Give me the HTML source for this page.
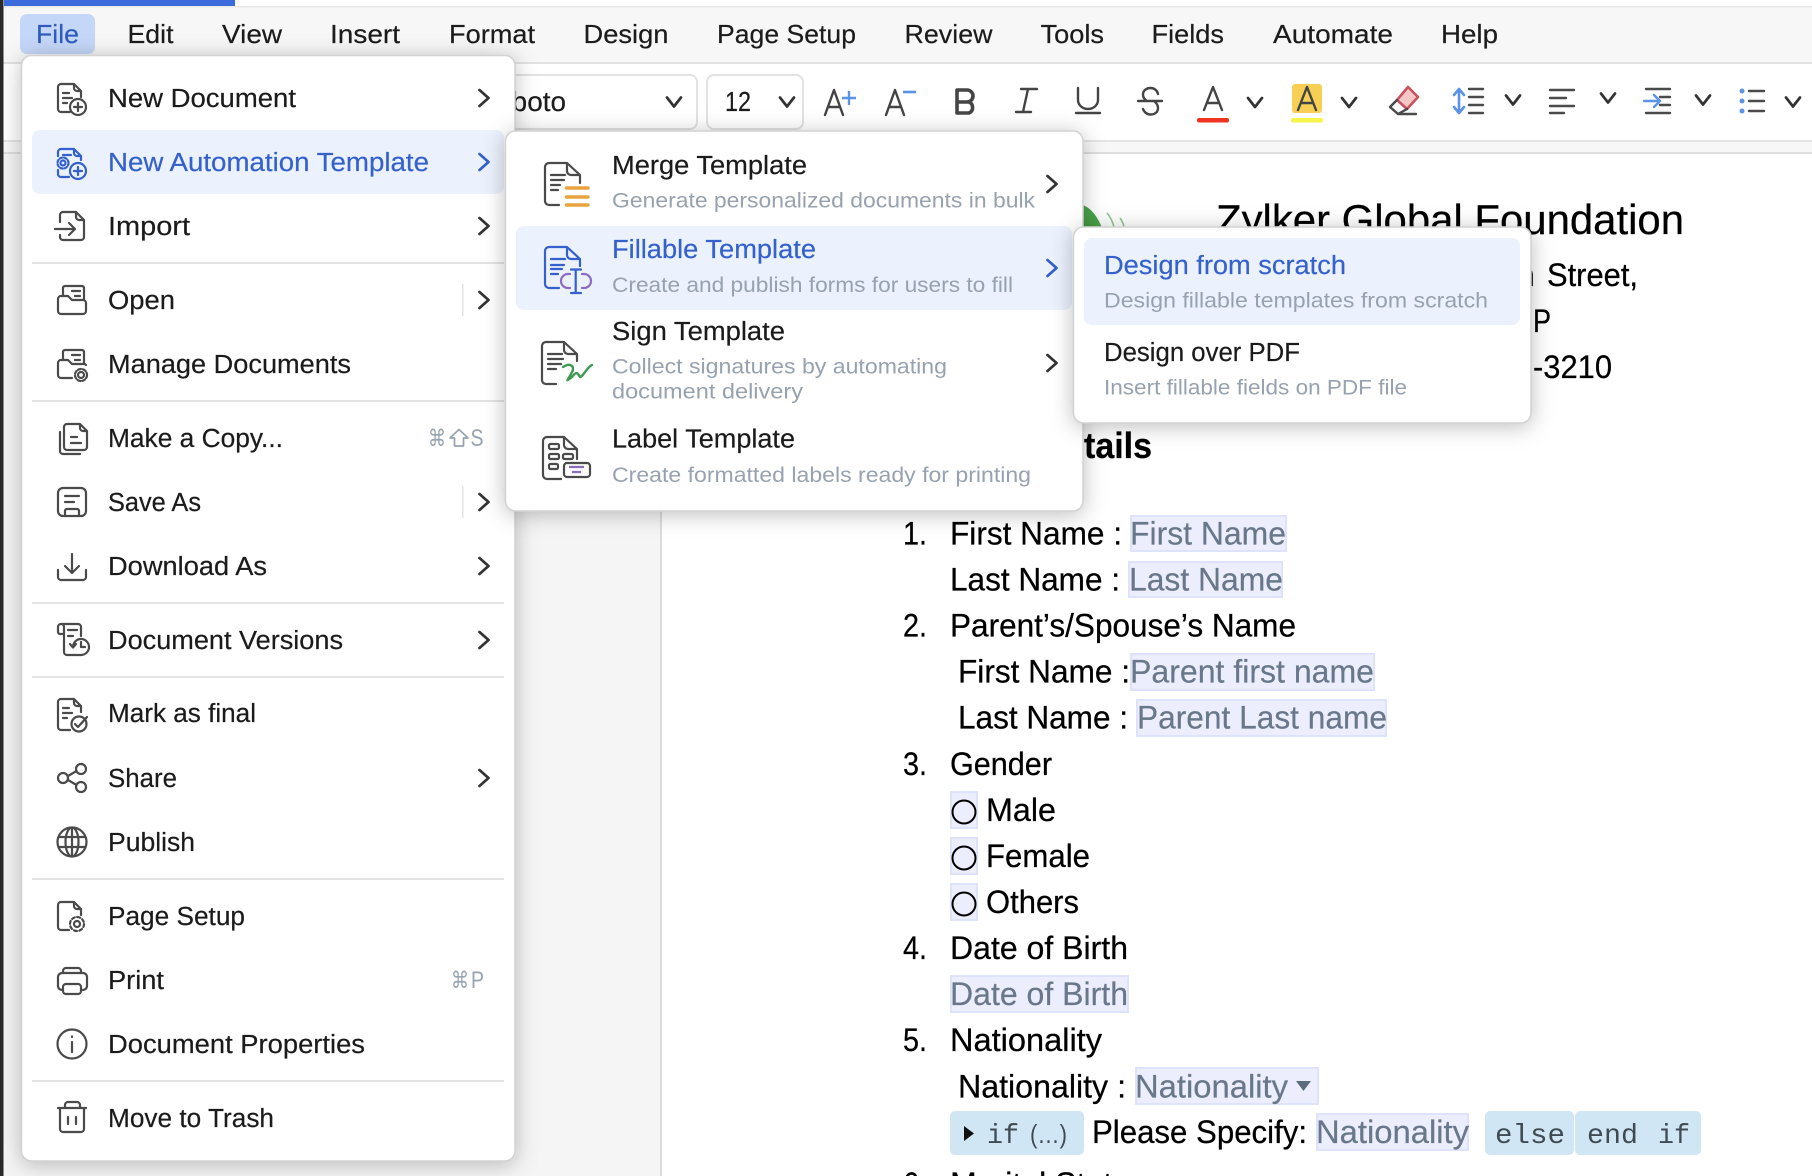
<!DOCTYPE html>
<html><head><meta charset="utf-8"><title>Zoho Writer</title>
<style>
html,body{margin:0;padding:0;background:#fff;width:1812px;height:1176px;overflow:hidden}
svg{display:block}
text{font-family:"Liberation Sans",sans-serif;white-space:pre}
.b{font-size:26px;fill:#1c1c1c;stroke:#1c1c1c;stroke-width:.2}
.m{font-size:25.5px;fill:#1b1b1b;stroke:#1b1b1b;stroke-width:.2}
.s{font-size:21.5px;fill:#98a2af}
.m.bl{fill:#3461cb;stroke:#3461cb}
.d{font-size:32px;fill:#000;stroke:#000;stroke-width:.25}
.f{font-size:32px;fill:#68788a;stroke:#68788a;stroke-width:.2}
.c{font-family:"Liberation Mono",monospace;font-size:28px;fill:#3f4a52}
.k{font-family:"DejaVu Sans",sans-serif;font-size:23px;fill:#97a3b0}
.k2{font-size:24px;fill:#97a3b0}
.ic{fill:none;stroke:#4a4a4a;stroke-width:2.2;stroke-linecap:round;stroke-linejoin:round}
.ch{fill:none;stroke:#333;stroke-width:2.7;stroke-linecap:round;stroke-linejoin:round}
.fb{fill:#ecedfd;stroke:#dfe2fb;stroke-width:2}
.sep{fill:#e3e3e3}
.pop{fill:#fff;stroke:#d2d2d2;stroke-width:1.5;filter:drop-shadow(0 3px 11px rgba(0,0,0,.25))}
</style></head><body>
<svg xmlns="http://www.w3.org/2000/svg" width="1812" height="1176" viewBox="0 0 1812 1176">
<defs>
<path id="chev" d="M-4.5 -8 L4.5 0 L-4.5 8"/>
<path id="dn" d="M-7 -4.5 L0 4.5 L7 -4.5"/>
</defs>

<rect width="1812" height="1176" fill="#fff"/>
<rect x="0" y="152" width="661" height="1024" fill="#f5f5f5"/>
<rect x="660" y="152" width="2" height="1024" fill="#dcdcdc"/>

<!-- document -->
<text class="d" x="1216" y="234" style="font-size:42px" textLength="468" lengthAdjust="spacingAndGlyphs">Zylker Global Foundation</text>
<text class="d" x="1515" y="286" textLength="20" lengthAdjust="spacingAndGlyphs">n</text>
<text class="d" x="1547" y="286" textLength="91" lengthAdjust="spacingAndGlyphs">Street,</text>
<text class="d" x="1533" y="332" textLength="18" lengthAdjust="spacingAndGlyphs">P</text>
<text class="d" x="1533" y="378" textLength="79" lengthAdjust="spacingAndGlyphs">-3210</text>
<text class="d" x="1084" y="458" style="font-size:36px;font-weight:bold" textLength="68" lengthAdjust="spacingAndGlyphs">tails</text>
<path d="M1083 205 Q1095 210 1102 228 H1083 Z" fill="#4aa54a"/>
<path d="M1107 213 Q1112 219 1114 227 M1120 218 Q1123 222 1124 227" stroke="#8cc98c" stroke-width="1.6" fill="none"/>

<text class="d" x="903" y="544.5" textLength="24" lengthAdjust="spacingAndGlyphs">1.</text>
<text class="d" x="950" y="544.5" textLength="172" lengthAdjust="spacingAndGlyphs">First Name :</text>
<rect class="fb" x="1131" y="516" width="155" height="35"/>
<text class="f" x="1130" y="544.5" textLength="156" lengthAdjust="spacingAndGlyphs">First Name</text>
<text class="d" x="950" y="590.5" textLength="170" lengthAdjust="spacingAndGlyphs">Last Name :</text>
<rect class="fb" x="1129" y="562" width="153" height="35"/>
<text class="f" x="1129" y="590.5" textLength="154" lengthAdjust="spacingAndGlyphs">Last Name</text>
<text class="d" x="903" y="636.5" textLength="24" lengthAdjust="spacingAndGlyphs">2.</text>
<text class="d" x="950" y="636.5" textLength="346" lengthAdjust="spacingAndGlyphs">Parent’s/Spouse’s Name</text>
<text class="d" x="958" y="682.5" textLength="172" lengthAdjust="spacingAndGlyphs">First Name :</text>
<rect class="fb" x="1131" y="654" width="243" height="36"/>
<text class="f" x="1130" y="682.5" textLength="244" lengthAdjust="spacingAndGlyphs">Parent first name</text>
<text class="d" x="958" y="728.5" textLength="170" lengthAdjust="spacingAndGlyphs">Last Name :</text>
<rect class="fb" x="1137" y="700" width="249" height="36"/>
<text class="f" x="1137" y="728.5" textLength="250" lengthAdjust="spacingAndGlyphs">Parent Last name</text>
<text class="d" x="903" y="775" textLength="24" lengthAdjust="spacingAndGlyphs">3.</text>
<text class="d" x="950" y="775" textLength="102" lengthAdjust="spacingAndGlyphs">Gender</text>

<rect class="fb" x="951" y="792" width="26" height="36"/>
<ellipse cx="964" cy="812" rx="11.5" ry="11.5" fill="none" stroke="#000" stroke-width="2"/>
<text class="d" x="986" y="821" textLength="70" lengthAdjust="spacingAndGlyphs">Male</text>
<rect class="fb" x="951" y="838" width="26" height="36"/>
<ellipse cx="964" cy="858" rx="11.5" ry="11.5" fill="none" stroke="#000" stroke-width="2"/>
<text class="d" x="986" y="867" textLength="104" lengthAdjust="spacingAndGlyphs">Female</text>
<rect class="fb" x="951" y="884" width="26" height="36"/>
<ellipse cx="964" cy="904" rx="11.5" ry="11.5" fill="none" stroke="#000" stroke-width="2"/>
<text class="d" x="986" y="913" textLength="93" lengthAdjust="spacingAndGlyphs">Others</text>

<text class="d" x="903" y="959" textLength="24" lengthAdjust="spacingAndGlyphs">4.</text>
<text class="d" x="950" y="959" textLength="178" lengthAdjust="spacingAndGlyphs">Date of Birth</text>
<rect class="fb" x="951" y="976" width="177" height="36"/>
<text class="f" x="950" y="1005" textLength="178" lengthAdjust="spacingAndGlyphs">Date of Birth</text>
<text class="d" x="903" y="1051" textLength="24" lengthAdjust="spacingAndGlyphs">5.</text>
<text class="d" x="950" y="1051" textLength="152" lengthAdjust="spacingAndGlyphs">Nationality</text>
<text class="d" x="958" y="1097.5" textLength="168" lengthAdjust="spacingAndGlyphs">Nationality :</text>
<rect class="fb" x="1136" y="1068" width="182" height="36"/>
<text class="f" x="1135" y="1097.5" textLength="153" lengthAdjust="spacingAndGlyphs">Nationality</text>
<path d="M1296 1081 H1311 L1303.5 1091Z" fill="#5d6c7c"/>

<rect x="950" y="1111" width="134" height="44" rx="5" fill="#d1e6f5"/>
<path d="M964 1126 L974 1133.5 L964 1141Z" fill="#111"/>
<text class="c" x="987" y="1143" textLength="32" lengthAdjust="spacingAndGlyphs">if</text>
<text class="c" x="1030" y="1143" textLength="37" lengthAdjust="spacingAndGlyphs" style="font-family:'Liberation Sans',sans-serif;font-size:26px">(…)</text>
<text class="d" x="1092" y="1143" textLength="215" lengthAdjust="spacingAndGlyphs">Please Specify:</text>
<rect class="fb" x="1317" y="1114" width="151" height="36"/>
<text class="f" x="1316" y="1143" textLength="153" lengthAdjust="spacingAndGlyphs">Nationality</text>
<rect x="1485" y="1111" width="89" height="44" rx="5" fill="#d1e6f5"/>
<rect x="1575" y="1111" width="126" height="44" rx="5" fill="#d1e6f5"/>
<text class="c" x="1495" y="1143" textLength="70" lengthAdjust="spacingAndGlyphs">else</text>
<text class="c" x="1587" y="1143" textLength="51" lengthAdjust="spacingAndGlyphs">end</text>
<text class="c" x="1658" y="1143" textLength="32" lengthAdjust="spacingAndGlyphs">if</text>
<text class="d" x="903" y="1195" textLength="24" lengthAdjust="spacingAndGlyphs">6.</text>
<text class="d" x="950" y="1195" textLength="196" lengthAdjust="spacingAndGlyphs">Marital Status</text>

<!-- chrome -->
<rect x="0" y="6" width="1812" height="56" fill="#f7f7f7"/>
<rect x="0" y="6" width="1812" height="1.5" fill="#e8e8e8"/>
<rect x="0" y="62" width="1812" height="2" fill="#e2e2e2"/>
<rect x="0" y="64" width="1812" height="76" fill="#fff"/>
<rect x="0" y="140" width="1812" height="2" fill="#e4e4e4"/>
<rect x="0" y="142" width="1812" height="10" fill="#f7f7f7"/>
<rect x="0" y="152" width="1812" height="2" fill="#dedede"/>
<rect x="4" y="0" width="231" height="6" fill="#3c6cdb"/>
<rect x="0" y="0" width="3.5" height="1176" fill="#2a2a2a"/>

<rect x="20" y="14" width="75" height="40" rx="7" fill="#c5d7f8"/>
<text class="b" x="36" y="43" style="fill:#2f5bbd;stroke:#2f5bbd" textLength="43" lengthAdjust="spacingAndGlyphs">File</text>
<text class="b" x="127.5" y="43" textLength="46" lengthAdjust="spacingAndGlyphs">Edit</text>
<text class="b" x="222" y="43" textLength="60" lengthAdjust="spacingAndGlyphs">View</text>
<text class="b" x="330" y="43" textLength="70" lengthAdjust="spacingAndGlyphs">Insert</text>
<text class="b" x="449" y="43" textLength="86" lengthAdjust="spacingAndGlyphs">Format</text>
<text class="b" x="583.5" y="43" textLength="85" lengthAdjust="spacingAndGlyphs">Design</text>
<text class="b" x="717" y="43" textLength="139" lengthAdjust="spacingAndGlyphs">Page Setup</text>
<text class="b" x="904.5" y="43" textLength="88" lengthAdjust="spacingAndGlyphs">Review</text>
<text class="b" x="1040.5" y="43" textLength="63.5" lengthAdjust="spacingAndGlyphs">Tools</text>
<text class="b" x="1151.5" y="43" textLength="72.5" lengthAdjust="spacingAndGlyphs">Fields</text>
<text class="b" x="1273" y="43" textLength="120" lengthAdjust="spacingAndGlyphs">Automate</text>
<text class="b" x="1441" y="43" textLength="57" lengthAdjust="spacingAndGlyphs">Help</text>

<!-- toolbar -->
<rect x="430" y="75" width="267" height="54" rx="7" fill="#fff" stroke="#e2e2e2" stroke-width="2"/>
<text class="b" x="476" y="111" style="font-size:28px" textLength="90" lengthAdjust="spacingAndGlyphs">Roboto</text>
<use href="#dn" x="674" y="102" class="ch"/>
<rect x="707" y="75" width="96" height="54" rx="7" fill="#fff" stroke="#e2e2e2" stroke-width="2"/>
<text class="b" x="725" y="111" style="font-size:28px" textLength="26" lengthAdjust="spacingAndGlyphs">12</text>
<use href="#dn" x="787" y="102" class="ch"/>

<g class="ic" style="stroke:#444;stroke-width:2.4">
<path d="M825 115 L834 90 L843 115 M828.5 107 H839.5"/>
<path d="M886 115 L895 90 L904 115 M889.5 107 H900.5"/>
<path d="M1021 89 H1037 M1016 112 H1031 M1028 89 L1023 112"/>
<path d="M1078 88 V100 a10 9 0 0 0 20 0 V88 M1076 113 H1100"/>
<path d="M1158 94 C1157 90 1154 88 1150.5 88 C1146 88 1143 91 1143 94.5 C1143 97 1144.5 99.5 1147 101 M1154 101 C1156.5 103 1158 105 1158 108 C1158 112 1155 114.5 1150.5 114.5 C1147 114.5 1144 112 1143 109 M1138 101 H1162"/>
<path d="M1204 110 L1213 87 L1222 110 M1207 103 H1219"/>
</g>
<path d="M957 90 H967 a6 6 0 0 1 0 12 H957 Z M957 102 H969 a6 6 0 0 1 0 11 H957 Z" fill="none" stroke="#454545" stroke-width="3.6" stroke-linejoin="round"/>
<path d="M849 91 V105 M842 98 H856" stroke="#5b93e6" stroke-width="2.4" fill="none"/>
<path d="M903 92 H916" stroke="#5b93e6" stroke-width="2.6" fill="none"/>
<rect x="1197" y="118" width="32" height="4.5" rx="2" fill="#ee3524"/>
<use href="#dn" x="1255" y="102.5" class="ch"/>
<rect x="1292" y="84" width="30" height="29" rx="3" fill="#f7cf55"/>
<path d="M1298 110 L1307 87 L1316 110 M1301 103 H1313" class="ic" style="stroke:#444;stroke-width:2.4"/>
<rect x="1291" y="118" width="32" height="4.5" rx="2" fill="#f7f44a"/>
<use href="#dn" x="1349" y="102.5" class="ch"/>
<path d="M1397 100 L1408 87 L1418 97 L1407 109 Z" fill="#f6c7c7" stroke="#c9525c" stroke-width="2.6" stroke-linejoin="round"/>
<path d="M1397 100 L1390 107 L1398 114 H1416 M1398 114 L1407 109" class="ic" style="stroke-width:2.4"/>
<path d="M1459 90 V112 M1454 95 L1459 89 L1464 95 M1454 107 L1459 113 L1464 107" fill="none" stroke="#5b93e6" stroke-width="2.6" stroke-linecap="round" stroke-linejoin="round"/>
<path d="M1469 89 H1483 M1469 97 H1483 M1469 105 H1483 M1469 113 H1483" class="ic" style="stroke-width:2.4"/>
<use href="#dn" x="1513" y="100" class="ch"/>
<path d="M1550 90 H1574 M1550 98 H1566 M1550 106 H1574 M1550 113 H1564" class="ic" style="stroke-width:2.4"/>
<use href="#dn" x="1608" y="98" class="ch"/>
<path d="M1646 89 H1670 M1660 97 H1670 M1660 105 H1670 M1646 113 H1670" class="ic" style="stroke-width:2.4"/>
<path d="M1644 101 H1660 M1654 95 L1660 101 L1654 107" fill="none" stroke="#5b93e6" stroke-width="2.4" stroke-linecap="round" stroke-linejoin="round"/>
<use href="#dn" x="1703" y="100" class="ch"/>
<circle cx="1742" cy="91" r="2.5" fill="#5b93e6"/><circle cx="1742" cy="101" r="2.5" fill="#5b93e6"/><circle cx="1742" cy="111" r="2.5" fill="#5b93e6"/>
<path d="M1749 91 H1764 M1749 101 H1764 M1749 111 H1764" class="ic" style="stroke-width:2.4"/>
<use href="#dn" x="1793" y="102" class="ch"/>

<!-- file menu -->
<rect class="pop" x="21.5" y="55.5" width="493.5" height="1105.5" rx="10"/>
<rect x="32" y="130" width="472" height="64" rx="8" fill="#ebf1fd"/>
<rect class="sep" x="32" y="262" width="472" height="2"/>
<rect class="sep" x="32" y="400" width="472" height="2"/>
<rect class="sep" x="32" y="602" width="472" height="2"/>
<rect class="sep" x="32" y="676" width="472" height="2"/>
<rect class="sep" x="32" y="878" width="472" height="2"/>
<rect class="sep" x="32" y="1080" width="472" height="2"/>
<rect class="sep" x="462" y="284" width="1.5" height="32"/>
<rect class="sep" x="462" y="486" width="1.5" height="32"/>

<text class="m" x="108" y="107" textLength="188" lengthAdjust="spacingAndGlyphs">New Document</text>
<text class="m bl" x="108" y="171" textLength="321" lengthAdjust="spacingAndGlyphs">New Automation Template</text>
<text class="m" x="108" y="235" textLength="82" lengthAdjust="spacingAndGlyphs">Import</text>
<text class="m" x="108" y="309" textLength="67" lengthAdjust="spacingAndGlyphs">Open</text>
<text class="m" x="108" y="373" textLength="243" lengthAdjust="spacingAndGlyphs">Manage Documents</text>
<text class="m" x="108" y="447" textLength="175" lengthAdjust="spacingAndGlyphs">Make a Copy...</text>
<text class="m" x="108" y="511" textLength="93" lengthAdjust="spacingAndGlyphs">Save As</text>
<text class="m" x="108" y="575" textLength="159" lengthAdjust="spacingAndGlyphs">Download As</text>
<text class="m" x="108" y="649" textLength="235" lengthAdjust="spacingAndGlyphs">Document Versions</text>
<text class="m" x="108" y="722" textLength="148" lengthAdjust="spacingAndGlyphs">Mark as final</text>
<text class="m" x="108" y="787" textLength="69" lengthAdjust="spacingAndGlyphs">Share</text>
<text class="m" x="108" y="851" textLength="87" lengthAdjust="spacingAndGlyphs">Publish</text>
<text class="m" x="108" y="925" textLength="137" lengthAdjust="spacingAndGlyphs">Page Setup</text>
<text class="m" x="108" y="989" textLength="56" lengthAdjust="spacingAndGlyphs">Print</text>
<text class="m" x="108" y="1053" textLength="257" lengthAdjust="spacingAndGlyphs">Document Properties</text>
<text class="m" x="108" y="1127" textLength="166" lengthAdjust="spacingAndGlyphs">Move to Trash</text>
<text class="k" x="428" y="446" textLength="18" lengthAdjust="spacingAndGlyphs">⌘</text>
<path d="M459 429.5 L468 438 H463.5 V446 H454.5 V438 H450 Z" fill="none" stroke="#97a3b0" stroke-width="1.7" stroke-linejoin="round"/>
<text class="k2" x="470.5" y="446" textLength="13" lengthAdjust="spacingAndGlyphs">S</text>
<text class="k" x="451" y="988" textLength="18" lengthAdjust="spacingAndGlyphs">⌘</text>
<text class="k2" x="471" y="988" textLength="13" lengthAdjust="spacingAndGlyphs">P</text>

<use href="#chev" x="484" y="98" class="ch"/>
<use href="#chev" x="484" y="162" class="ch" style="stroke:#3461cb"/>
<use href="#chev" x="484" y="226" class="ch"/>
<use href="#chev" x="484" y="300" class="ch"/>
<use href="#chev" x="484" y="502" class="ch"/>
<use href="#chev" x="484" y="566" class="ch"/>
<use href="#chev" x="484" y="640" class="ch"/>
<use href="#chev" x="484" y="778" class="ch"/>

<g class="ic">
<!-- new document -->
<path d="M70 112 H61 a3 3 0 0 1 -3 -3 V87 a3 3 0 0 1 3 -3 H74 L81 91 V97 M74 84 V88 a3 3 0 0 0 3 3 H81 M63 93 H69 M63 98 H72 M63 103 H67"/>
<circle cx="78" cy="107" r="8"/><path d="M78 103 V111 M74 107 H82"/>
<!-- import -->
<path d="M60 222 V215 a3 3 0 0 1 3 -3 H76 L84 220 V237 a3 3 0 0 1 -3 3 H63 a3 3 0 0 1 -3 -3 V235 M76 212 V217 a3 3 0 0 0 3 3 H84 M55 229 H75 M69 223 L75 229 L69 235"/>
<!-- open -->
<path d="M63 296 V288 a2 2 0 0 1 2 -2 H82 a2 2 0 0 1 2 2 V299 M72 291 H80 M75 296 H80"/>
<path d="M61 314 a3 3 0 0 1 -3 -3 V299 a3 3 0 0 1 3 -3 H68 L72 300 H83 a3 3 0 0 1 3 3 V311 a3 3 0 0 1 -3 3 Z"/>
<!-- manage -->
<path d="M63 360 V352 a2 2 0 0 1 2 -2 H82 a2 2 0 0 1 2 2 V364 M72 355 H80 M75 360 H80"/>
<path d="M72 378 H61 a3 3 0 0 1 -3 -3 V363 a3 3 0 0 1 3 -3 H68 L72 364 H83 a3 3 0 0 1 3 1"/>
<circle cx="81" cy="375" r="3"/><circle cx="81" cy="375" r="6" stroke-dasharray="3 2"/>
<!-- copy -->
<path d="M67 424 H80 L87 431 V447 a3 3 0 0 1 -3 3 H67 a3 3 0 0 1 -3 -3 V427 a3 3 0 0 1 3 -3 M80 424 V428 a3 3 0 0 0 3 3 H87 M60 432 V451 a3 3 0 0 0 3 3 H80 M71 437 H77 M71 443 H81"/>
<!-- save -->
<rect x="58" y="488" width="28" height="28" rx="5"/>
<path d="M65 496 H79 M65 502 H74 M65 516 V511 a2 2 0 0 1 2 -2 H77 a2 2 0 0 1 2 2 V516"/>
<!-- download -->
<path d="M72 554 V572 M65 566 L72 573 L79 566 M58 570 V577 a3 3 0 0 0 3 3 H83 a3 3 0 0 0 3 -3 V570"/>
<!-- versions -->
<path d="M63 634 H60 a2 2 0 0 1 -2 -2 V627 a3 3 0 0 1 3 -3 H78 a3 3 0 0 1 3 3 V636 M61 624 a3 3 0 0 1 3 3 V652 a3 3 0 0 0 3 3 H81 M68 630 H77 M68 636 H73"/>
<path d="M73 647 a8 8 0 1 1 8 8 M70 644 L73 647.5 L76 644 M81 642 V647 H85"/>
<!-- final -->
<path d="M70 730 H61 a3 3 0 0 1 -3 -3 V702 a3 3 0 0 1 3 -3 H74 L81 706 V712 M74 699 V703 a3 3 0 0 0 3 3 H81 M63 708 H69 M63 713 H72 M63 718 H67"/>
<circle cx="79" cy="724" r="7.5"/><path d="M75 724 L78 727 L87 717"/>
<!-- share -->
<circle cx="63" cy="778" r="5"/><circle cx="81" cy="769" r="5"/><circle cx="81" cy="787" r="5"/>
<path d="M68 776 L76.5 771 M68 780 L76.5 785"/>
<!-- publish -->
<circle cx="72" cy="842" r="14.5"/><ellipse cx="72" cy="842" rx="6.5" ry="14.5"/>
<path d="M59 837 H85 M59 847 H85 M72 828 V856"/>
<!-- page setup -->
<path d="M69 930 H61 a3 3 0 0 1 -3 -3 V905 a3 3 0 0 1 3 -3 H74 L81 909 V915 M74 902 V906 a3 3 0 0 0 3 3 H81"/>
<circle cx="77" cy="924" r="3"/><circle cx="77" cy="924" r="7" stroke-dasharray="3 2.5"/>
<!-- print -->
<path d="M63 973 V971 a3 3 0 0 1 3 -3 H78 a3 3 0 0 1 3 3 V973"/>
<path d="M63 990 H62 a4 4 0 0 1 -4 -4 V977 a4 4 0 0 1 4 -4 H83 a4 4 0 0 1 4 4 V986 a4 4 0 0 1 -4 4 H81"/>
<rect x="63" y="984" width="18" height="10" rx="3"/>
<!-- info -->
<circle cx="72" cy="1044" r="14.5"/><path d="M72 1042 V1052 M72 1036.5 V1037"/>
<!-- trash -->
<path d="M58 1108 H86 M65 1108 V1105 a3 3 0 0 1 3 -3 H77 a3 3 0 0 1 3 3 V1108 M60 1108 V1129 a3 3 0 0 0 3 3 H81 a3 3 0 0 0 3 -3 V1108 M68 1117 V1124 M76 1117 V1124"/>
</g>
<!-- automation -->
<g class="ic" style="stroke:#3461cb">
<path d="M58 156 V152 a3 3 0 0 1 3 -3 H74 L81 156 V160 M74 149 V153 a3 3 0 0 0 3 3 H81 M63 155 H71 M58 170 V174 a3 3 0 0 0 3 3 H69"/>
<circle cx="63" cy="163" r="2.5"/><circle cx="63" cy="163" r="5.5" stroke-dasharray="2.5 2"/>
<circle cx="78" cy="171" r="8"/><path d="M78 167 V175 M74 171 H82"/>
</g>

<!-- submenu 1 -->
<rect class="pop" x="505.5" y="131" width="577.5" height="380" rx="10"/>
<rect x="516" y="226" width="556" height="84" rx="8" fill="#ebf1fd"/>
<text class="m" x="612" y="174" textLength="195" lengthAdjust="spacingAndGlyphs">Merge Template</text>
<text class="s" x="612" y="207.5" textLength="423" lengthAdjust="spacingAndGlyphs">Generate personalized documents in bulk</text>
<text class="m bl" x="612" y="258" textLength="204" lengthAdjust="spacingAndGlyphs">Fillable Template</text>
<text class="s" x="612" y="292" textLength="401" lengthAdjust="spacingAndGlyphs">Create and publish forms for users to fill</text>
<text class="m" x="612" y="340" textLength="173" lengthAdjust="spacingAndGlyphs">Sign Template</text>
<text class="s" x="612" y="373.5" textLength="335" lengthAdjust="spacingAndGlyphs">Collect signatures by automating</text>
<text class="s" x="612" y="398.5" textLength="191" lengthAdjust="spacingAndGlyphs">document delivery</text>
<text class="m" x="612" y="447.5" textLength="183" lengthAdjust="spacingAndGlyphs">Label Template</text>
<text class="s" x="612" y="482" textLength="419" lengthAdjust="spacingAndGlyphs">Create formatted labels ready for printing</text>
<use href="#chev" x="1052" y="184" class="ch"/>
<use href="#chev" x="1052" y="268" class="ch" style="stroke:#3461cb"/>
<use href="#chev" x="1052" y="363" class="ch"/>

<g class="ic">
<path d="M559 205 H549 a4 4 0 0 1 -4 -4 V167 a4 4 0 0 1 4 -4 H567 L580 175 V183 M567 163 V171 a4 4 0 0 0 4 4 H580"/>
<path d="M551 175 H565 M551 180 H564 M551 185 H560 M551 190 H558"/>
<path d="M556 384 H546 a4 4 0 0 1 -4 -4 V346 a4 4 0 0 1 4 -4 H564 L577 354 V361 M564 342 V350 a4 4 0 0 0 4 4 H577"/>
<path d="M548 354 H562 M548 359 H563 M548 364 H561 M548 369 H556"/>
<path d="M561 479 H547 a4 4 0 0 1 -4 -4 V441 a4 4 0 0 1 4 -4 H564 L577 449 V459 M564 437 V445 a4 4 0 0 0 4 4 H577"/>
<rect x="549" y="444" width="10" height="5" rx="1.5"/><rect x="549" y="454" width="10" height="5" rx="1.5"/><rect x="563" y="454" width="10" height="5" rx="1.5"/><rect x="549" y="464" width="9" height="5" rx="1.5"/>
<rect x="564" y="463" width="26" height="14" rx="3" fill="#fff"/>
</g>
<path d="M569 467 H584 M572 472 H581" stroke="#8b6cc0" stroke-width="2.2" fill="none"/>
<path d="M566.5 188 H588 M566.5 197 H588 M566.5 205 H588" stroke="#e8a33d" stroke-width="3.4" stroke-linecap="round" fill="none"/>
<path d="M563 367 C571 362 575 367 572 372 C567 382 565 382 572 377 C577 370 578 374 580 377 C583 377 587 367 592 365" fill="none" stroke="#3d9a52" stroke-width="2.4" stroke-linecap="round" stroke-linejoin="round"/>
<g class="ic" style="stroke:#3461cb">
<path d="M559 288 H549 a4 4 0 0 1 -4 -4 V251 a4 4 0 0 1 4 -4 H567 L580 259 V266 M567 247 V255 a4 4 0 0 0 4 4 H580"/>
<path d="M551 259 H565 M551 265 H564 M551 269 H562 M551 274 H558"/>
<path d="M575.7 270 V293 M571 269.5 H581 M571 293 H581"/>
</g>
<path d="M570 274 H568 a7 7 0 0 0 0 14 H570 M582 274 H584 a7 7 0 0 1 0 14 H582" fill="none" stroke="#8b6cc0" stroke-width="2.2" stroke-linecap="round"/>

<!-- submenu 2 -->
<rect class="pop" x="1073.5" y="227" width="457.5" height="196" rx="10"/>
<rect x="1084" y="238" width="436" height="87" rx="8" fill="#ebf1fd"/>
<text class="m bl" x="1104" y="274" textLength="242" lengthAdjust="spacingAndGlyphs">Design from scratch</text>
<text class="s" x="1104" y="307.5" textLength="384" lengthAdjust="spacingAndGlyphs">Design fillable templates from scratch</text>
<text class="m" x="1104" y="361" textLength="196" lengthAdjust="spacingAndGlyphs">Design over PDF</text>
<text class="s" x="1104" y="394.5" textLength="303" lengthAdjust="spacingAndGlyphs">Insert fillable fields on PDF file</text>
</svg>
</body></html>
